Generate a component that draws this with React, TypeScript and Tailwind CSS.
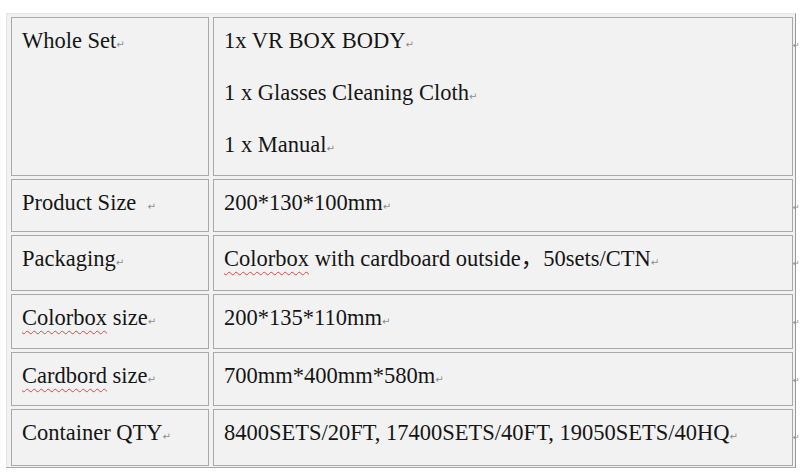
import React from "react";

type Row = {
  label: React.ReactNode;
  value: React.ReactNode;
  h: string;
};

function Mark() {
  return (
    <span className="font-['DejaVu_Sans',sans-serif] text-[10px] leading-none text-[#8c8c8c]">↵</span>
  );
}

function Squiggle({ children }: { children: React.ReactNode }) {
  return (
    <span className="underline decoration-wavy decoration-[#e04848] decoration-[1px] underline-offset-[5px]">
      {children}
    </span>
  );
}

const rows: Row[] = [
  {
    label: (
      <>
        Whole Set
        <Mark />
      </>
    ),
    value: (
      <div className="flex flex-col gap-[26px]">
        <p>
          1x VR BOX BODY
          <Mark />
        </p>
        <p>
          1 x Glasses Cleaning Cloth
          <Mark />
        </p>
        <p>
          1 x Manual
          <Mark />
        </p>
      </div>
    ),
    h: "h-[159px]",
  },
  {
    label: (
      <>
        Product Size{"\u00a0\u00a0"}
        <Mark />
      </>
    ),
    value: (
      <>
        200*130*100mm
        <Mark />
      </>
    ),
    h: "h-[53px]",
  },
  {
    label: (
      <>
        Packaging
        <Mark />
      </>
    ),
    value: (
      <>
        <Squiggle>Colorbox</Squiggle> with cardboard outside，50sets/CTN
        <Mark />
      </>
    ),
    h: "h-[56px]",
  },
  {
    label: (
      <>
        <Squiggle>Colorbox</Squiggle> size
        <Mark />
      </>
    ),
    value: (
      <>
        200*135*110mm
        <Mark />
      </>
    ),
    h: "h-[55px]",
  },
  {
    label: (
      <>
        <Squiggle>Cardbord</Squiggle> size
        <Mark />
      </>
    ),
    value: (
      <>
        700mm*400mm*580m
        <Mark />
      </>
    ),
    h: "h-[54px]",
  },
  {
    label: (
      <>
        Container QTY
        <Mark />
      </>
    ),
    value: (
      <>
        8400SETS/20FT, 17400SETS/40FT, 19050SETS/40HQ
        <Mark />
      </>
    ),
    h: "h-[57px]",
  },
];

export default function App() {
  return (
    <div className="w-[800px] h-[474px] bg-white overflow-hidden pt-[13px] pl-[6px]">
      <div className="w-[790px] bg-[#f2f2f2] border border-t-[#e4e4e4] border-l-[#e4e4e4] border-r-[#9a9a9a] border-b-[#a8a8a8] pt-[3px] pl-[4px] pr-[2px] pb-[1px] font-['Liberation_Serif','Noto_Sans_CJK_SC',serif] text-[22.5px] leading-[26px] text-[#151515]">
        <div className="flex flex-col gap-[3px]">
          {rows.map((r, i) => (
            <div key={i} className={`relative flex gap-[4px] ${r.h}`}>
              <div className="w-[198px] border border-[#a9a9a9] pt-[10px] pl-[10px]">
                {r.label}
              </div>
              <div className="w-[580px] border border-[#a9a9a9] pt-[10px] pl-[10px]">
                {r.value}
              </div>
              <span className="absolute left-full top-[25px] font-['DejaVu_Sans',sans-serif] text-[8px] leading-none text-[#8c8c8c]">
                ↵
              </span>
            </div>
          ))}
        </div>
      </div>
    </div>
  );
}
